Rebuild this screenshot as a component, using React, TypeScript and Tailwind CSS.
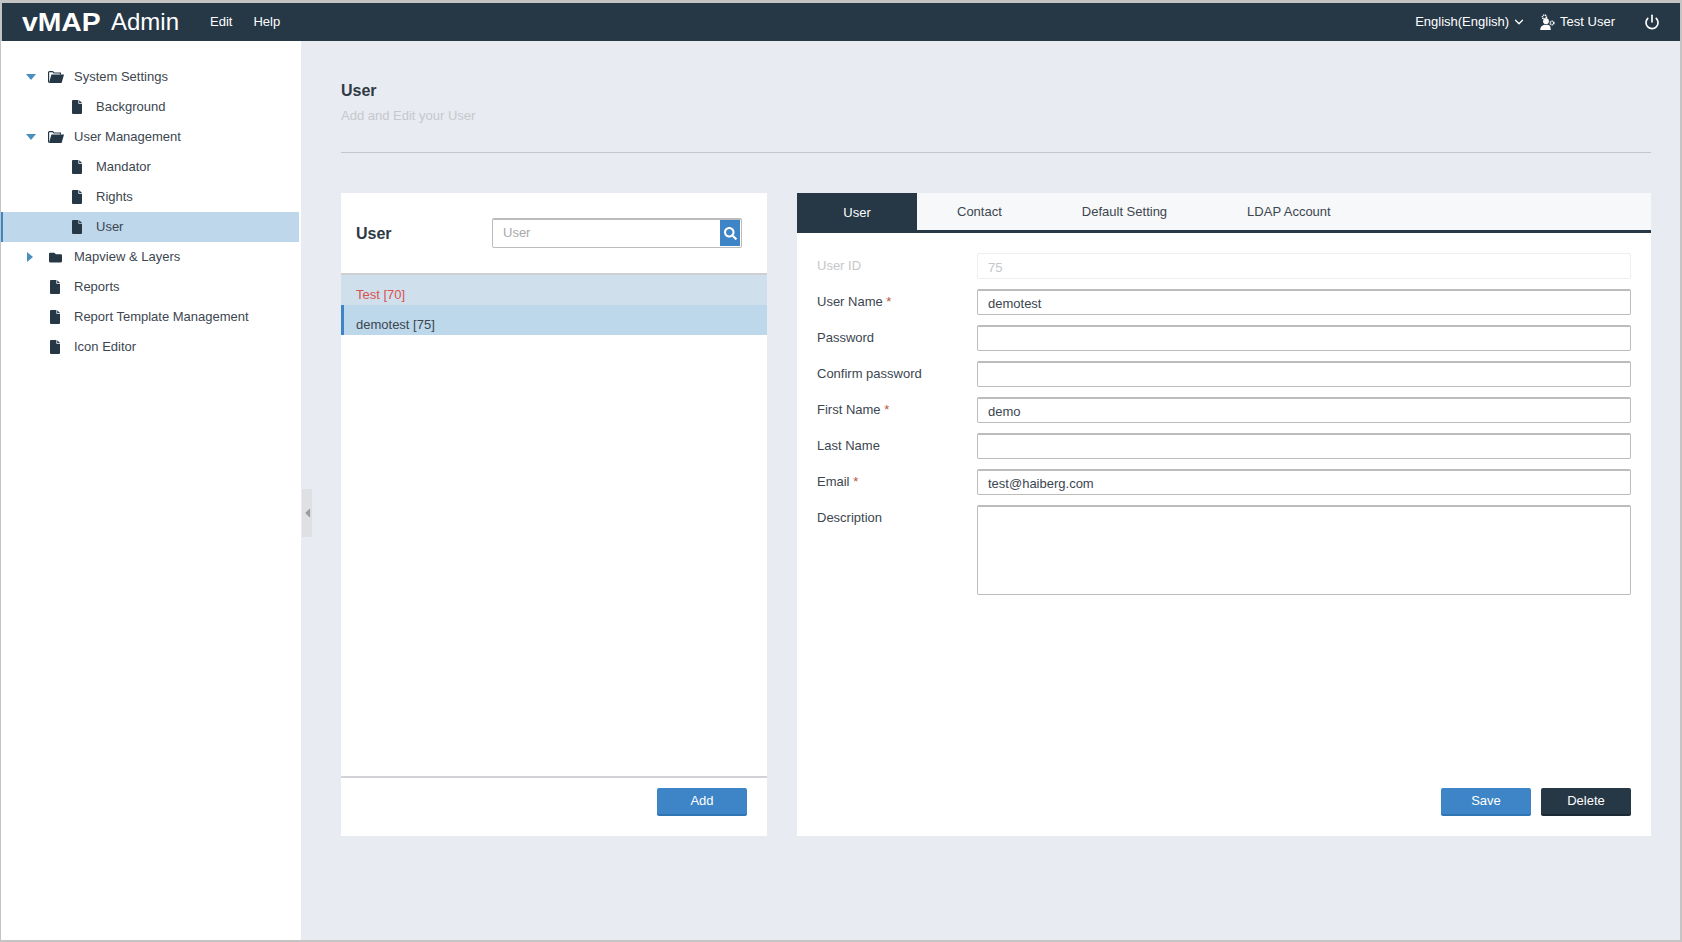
import React from "react";
import { FaFolder, FaSearch, FaCaretLeft } from "react-icons/fa";
import { ChevronDown, Power } from "lucide-react";

type TreeItem = { label: string; kind: "open" | "closed" | "file"; depth: 0 | 1; active?: boolean };

const tree: TreeItem[] = [
  { label: "System Settings", kind: "open", depth: 0 },
  { label: "Background", kind: "file", depth: 1 },
  { label: "User Management", kind: "open", depth: 0 },
  { label: "Mandator", kind: "file", depth: 1 },
  { label: "Rights", kind: "file", depth: 1 },
  { label: "User", kind: "file", depth: 1, active: true },
  { label: "Mapview & Layers", kind: "closed", depth: 0 },
  { label: "Reports", kind: "file", depth: 0 },
  { label: "Report Template Management", kind: "file", depth: 0 },
  { label: "Icon Editor", kind: "file", depth: 0 },
];

function FileIcon() {
  return (
    <svg viewBox="0 0 10 14" className="h-[14px] w-[10px] text-[#263746]" fill="currentColor">
      <path d="M1 0h5.4v3.8H10V13a1 1 0 0 1-1 1H1a1 1 0 0 1-1-1V1a1 1 0 0 1 1-1z" />
      <path d="M7.2 0.2L10 3H7.2z" />
    </svg>
  );
}

function FolderOpenIcon() {
  return (
    <svg viewBox="0 0 16 12" className="h-[12px] w-[16px] text-[#263746]">
      <path d="M0.6 11.4V1.4A.8.8 0 0 1 1.4.6h3.2L6 2h6.4v1.4" fill="none" stroke="currentColor" strokeWidth="1.2" />
      <path d="M3.4 3.4H16L13.6 12H1z" fill="currentColor" />
    </svg>
  );
}

function CaretDown() {
  return (
    <svg viewBox="0 0 10 6" className="h-[6px] w-[10px] text-[#4a8ebf]" fill="currentColor">
      <path d="M0 0h10L5 6z" />
    </svg>
  );
}

function CaretRight() {
  return (
    <svg viewBox="0 0 6 10" className="ml-[1px] h-[10px] w-[6px] text-[#4a8ebf]" fill="currentColor">
      <path d="M0 0v10l6-5z" />
    </svg>
  );
}

function UserGearIcon() {
  return (
    <svg viewBox="0 0 15 16" className="ml-[14px] h-[16px] w-[15px] text-white">
      <circle cx="4.4" cy="3" r="2" fill="none" stroke="currentColor" strokeWidth="1.6" strokeDasharray="1.2 0.6" />
      <circle cx="6" cy="7.2" r="2.9" fill="currentColor" />
      <circle cx="12" cy="9" r="1.8" fill="none" stroke="currentColor" strokeWidth="1.6" strokeDasharray="1.2 0.6" />
      <path d="M0.2 16C0.2 12.6 2.6 10.8 6 10.8c1.7 0 3.2.5 4.2 1.4L10.8 16z" fill="currentColor" />
    </svg>
  );
}

function TreeRow({ item }: { item: TreeItem }) {
  return (
    <div
      className={`flex h-[30px] items-center border-l-[2px] text-[13px] text-[#3c4650] ${
        item.active ? "border-[#3d85c6] bg-[#bfd7eb]" : "border-transparent"
      }`}
    >
      {item.kind === "file" ? (
        <span className={`flex w-[24px] items-center ${item.depth === 1 ? "ml-[69px]" : "ml-[47px]"}`}>
          <FileIcon />
        </span>
      ) : (
        <>
          <span className="ml-[23px] flex w-[22px] items-center">
            {item.kind === "open" ? <CaretDown /> : <CaretRight />}
          </span>
          <span className="flex w-[26px] items-center">
            {item.kind === "open" ? <FolderOpenIcon /> : <FaFolder className="h-[13px] w-[15px] text-[#263746]" />}
          </span>
        </>
      )}
      <span>{item.label}</span>
    </div>
  );
}

type Field = { label: string; value?: string; required?: boolean; disabled?: boolean; area?: boolean };

const fields: Field[] = [
  { label: "User ID", value: "75", disabled: true },
  { label: "User Name", value: "demotest", required: true },
  { label: "Password" },
  { label: "Confirm password" },
  { label: "First Name", value: "demo", required: true },
  { label: "Last Name" },
  { label: "Email", value: "test@haiberg.com", required: true },
  { label: "Description", area: true },
];

function FormRow({ f }: { f: Field }) {
  return (
    <div className="flex items-start">
      <label
        className={`w-[160px] shrink-0 pt-[4px] text-[13px] leading-[18px] ${
          f.disabled ? "text-[#c4c7ca]" : "text-[#3c4650]"
        }`}
      >
        {f.label}
        {f.required && <span className="text-[#b9553f]"> *</span>}
      </label>
      {f.area ? (
        <div className="h-[90px] flex-1 rounded-[2px] border border-t-2 border-[#bcbcbc] bg-white" />
      ) : (
        <div
          className={`flex h-[26px] flex-1 items-center rounded-[2px] px-[10px] pt-[3px] text-[13px] ${
            f.disabled
              ? "border border-[#eeeeee] bg-white text-[#c4c7ca]"
              : "border border-t-2 border-[#bcbcbc] bg-white text-[#3c4650]"
          }`}
        >
          {f.value}
        </div>
      )}
    </div>
  );
}

export default function App() {
  return (
    <div className="relative flex h-[942px] w-full flex-col bg-[#c4c4c4] pb-[2px] pl-[1px] pr-[2px] pt-[3px] font-['Liberation_Sans',Arial,sans-serif]">
      <header className="ml-[1px] flex h-[38px] shrink-0 items-center bg-[#263746] text-white">
        <span className="ml-[20px] inline-block w-[79px] origin-left scale-x-[1.09] text-[26px] font-bold leading-none">
          vMAP
        </span>
        <span className="ml-[10px] text-[24px] leading-none">Admin</span>
        <nav className="ml-[31px] flex gap-[21px] text-[13px]">
          <span>Edit</span>
          <span>Help</span>
        </nav>
        <div className="ml-auto flex items-center text-[13px]">
          <span>English(English)</span>
          <ChevronDown className="ml-[3px] h-[14px] w-[14px]" strokeWidth={2.2} />
          <UserGearIcon />
          <span className="ml-[5px]">Test User</span>
          <Power className="ml-[29px] mr-[20px] h-[16px] w-[16px]" strokeWidth={2.5} />
        </div>
      </header>

      <div className="flex min-h-0 flex-1">
        <aside className="w-[300px] shrink-0 bg-white pr-[2px] pt-[21px]">
          {tree.map((item) => (
            <TreeRow key={item.label} item={item} />
          ))}
        </aside>

        <main className="flex min-w-0 flex-1 flex-col bg-[#e9ebf3] pl-[40px] pr-[29px]">
          <h1 className="mt-[40px] text-[16px] font-bold leading-[20px] text-[#2f3a45]">User</h1>
          <p className="mt-[5px] text-[13px] leading-[20px] text-[#c5c8cc]">Add and Edit your User</p>
          <div className="mt-[26px] h-px bg-[#c4c6cb]" />

          <div className="mt-[40px] flex h-[643px] gap-[30px]">
            <section className="flex w-[426px] shrink-0 flex-col bg-white">
              <div className="flex h-[82px] shrink-0 items-center justify-between border-b-2 border-[#cdcfd2] pl-[15px] pr-[25px]">
                <span className="mt-[1px] text-[16px] font-bold text-[#2f3a45]">User</span>
                <div className="flex h-[30px] w-[250px] rounded-[2px] border border-t-2 border-[#bcbcbc] bg-white">
                  <span className="flex-1 pl-[10px] pt-[3px] text-[13px] leading-[20px] text-[#a6a9ad]">User</span>
                  <span className="mb-[1px] mr-[1px] flex w-[20px] items-center justify-center bg-[#3d85c6]">
                    <FaSearch className="h-[13px] w-[13px] text-white" />
                  </span>
                </div>
              </div>
              <div className="flex-1">
                <div className="flex h-[30px] items-end bg-[#d0dfec] pl-[15px] text-[13px] leading-[20px] text-[#d9534f]">
                  Test [70]
                </div>
                <div className="flex h-[30px] items-end border-l-[3px] border-[#3d85c6] bg-[#bdd7eb] pl-[12px] text-[13px] leading-[20px] text-[#3c4650]">
                  demotest [75]
                </div>
              </div>
              <div className="flex h-[60px] shrink-0 items-start justify-end border-t-2 border-[#d2d3d6] pr-[20px] pt-[10px]">
                <button className="h-[28px] w-[90px] rounded-[2px] border-b-2 border-[#2f74b3] bg-[#3d85c6] pb-[1px] text-[13px] text-white">
                  Add
                </button>
              </div>
            </section>

            <section className="flex min-w-0 flex-1 flex-col bg-white">
              <div className="flex h-[40px] shrink-0 border-b-[3px] border-[#263746] bg-[#f7f8f9] text-[13px] text-[#3c4650]">
                <span className="flex w-[120px] items-center justify-center bg-[#263746] pt-[2px] text-white">User</span>
                <span className="flex items-center px-[40px] pt-[1px]">Contact</span>
                <span className="flex items-center px-[40px] pt-[1px]">Default Setting</span>
                <span className="flex items-center px-[40px] pt-[1px]">LDAP Account</span>
              </div>
              <div className="flex flex-col gap-[10px] pl-[20px] pr-[20px] pt-[20px]">
                {fields.map((f) => (
                  <FormRow key={f.label} f={f} />
                ))}
              </div>
              <div className="mt-auto flex justify-end gap-[10px] pb-[20px] pr-[20px]">
                <button className="h-[28px] w-[90px] rounded-[2px] border-b-2 border-[#2f74b3] bg-[#3d85c6] pb-[1px] text-[13px] text-white">
                  Save
                </button>
                <button className="h-[28px] w-[90px] rounded-[2px] border-b-2 border-[#1c2a36] bg-[#263746] pb-[1px] text-[13px] text-white">
                  Delete
                </button>
              </div>
            </section>
          </div>
        </main>
      </div>

      <div className="absolute left-[302px] top-[489px] flex h-[48px] w-[10px] items-center justify-center bg-[#dfe0e4]">
        <FaCaretLeft className="h-[14px] w-[9px] text-[#9a9ca0]" />
      </div>
    </div>
  );
}
